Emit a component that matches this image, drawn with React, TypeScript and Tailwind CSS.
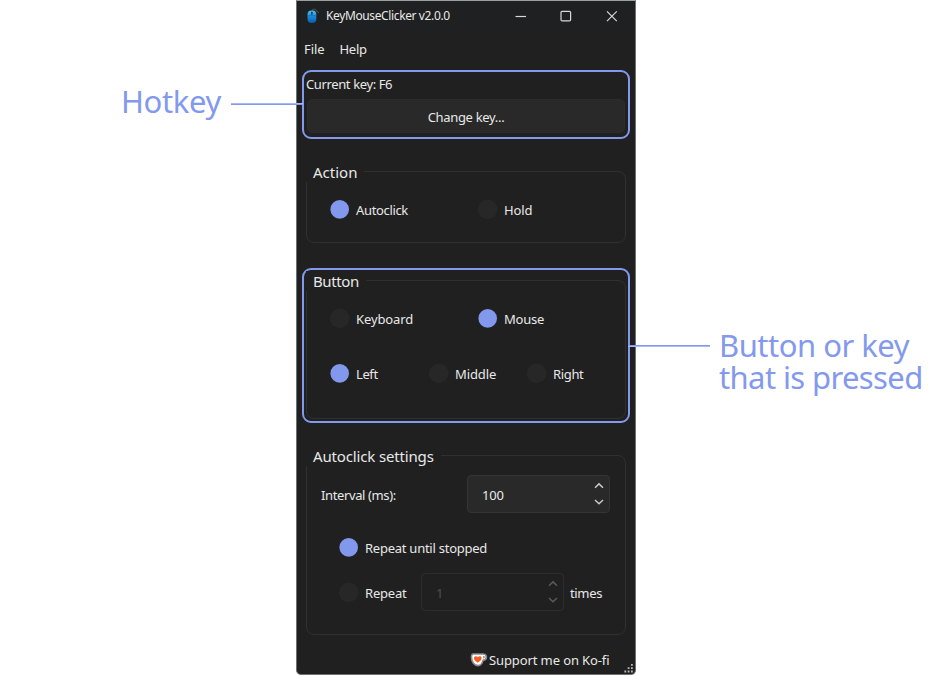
import type { ReactNode } from 'react';

function Radio({ on = false, label, className = '', text = '' }: { on?: boolean; label: string; className?: string; text?: string }) {
  return (
    <label className={`flex h-5 items-center ${className}`}>
      <svg className="shrink-0 overflow-visible" width="20" height="20" viewBox="0 0 20 20">
        <circle cx="9.7" cy="10.4" r={on ? 9.3 : 9.8} fill={on ? '#8298ec' : '#272727'} />
      </svg>
      <span className={`mt-[2px] ml-[6px] ${text}`}>{label}</span>
    </label>
  );
}

function Group({ title, titleClass, className, children }: { title: string; titleClass: string; className: string; children: ReactNode }) {
  return (
    <div className={`flex flex-col rounded-lg border border-[#303030] ${className}`}>
      <div className={`-mt-[10px] -ml-px flex h-5 shrink-0 items-center bg-[#202020] pb-px pl-[7px] text-[15px] ${titleClass}`}>{title}</div>
      {children}
    </div>
  );
}

function Spin({ value, disabled = false }: { value: string; disabled?: boolean }) {
  return (
    <div
      className={`flex h-[38px] w-[143px] shrink-0 items-center justify-between rounded-[4px] border pr-[5px] pl-[14px] ${
        disabled ? 'border-[#2d2d2d] bg-[#202020] text-[#505050]' : 'border-[#343434] bg-[#292929]'
      }`}
    >
      <span className="mt-px tracking-[-0.2px]">{value}</span>
      <svg width="10" height="24" viewBox="0 0 10 24" fill="none" stroke={disabled ? '#5a5a5a' : '#c8c8c8'} strokeWidth="1.5">
        <path d="M1 5.700 5 1.900l4 3.800M1 18l4 3.800L9 18" />
      </svg>
    </div>
  );
}

export default function App() {
  return (
    <div className="flex h-[676px] w-[932px] overflow-hidden bg-white font-['Noto_Sans','Open_Sans',sans-serif] whitespace-nowrap">
      <aside className="z-10 flex h-[120px] w-[303px] shrink-0 pt-[85px] pl-[121px] text-[#8299ee]">
        <div className="w-[110px] text-[31px] leading-8 tracking-[-0.35px]">Hotkey</div>
        <div className="mt-[18px] h-[2px] flex-1 border-t border-[#a9b9f4] bg-[#8299ee]" />
      </aside>

      <main className="-ml-[7px] flex h-[675px] w-[340px] shrink-0 flex-col rounded-b-[5px] border border-[#6d7270] border-t-[#9aa19e] bg-[#202020] text-[13px] leading-[18px] text-[#e8e8e8]">
        <header className="flex h-[31px] shrink-0 items-center bg-[#1e2021] pb-px pl-[9px]">
          <svg width="16" height="18" viewBox="0 0 16 18">
            <defs>
              <linearGradient id="mouse" x1="0" y1="0" x2="0" y2="1">
                <stop offset="0" stopColor="#4cc4f0" />
                <stop offset="0.45" stopColor="#1b8fdc" />
                <stop offset="1" stopColor="#0c58ad" />
              </linearGradient>
            </defs>
            <path d="M6.3 4.500C6.200 1.800 9 1.200 10.200 3.200c.9 1.600 1.800 1.500 2.600 2.800" fill="none" stroke="#464a4c" strokeWidth="1.2" />
            <rect x="1.5" y="3.5" width="8.800" height="12.500" rx="4" fill="url(#mouse)" />
            <path d="M1.700 8.700h8.400" stroke="#0f5fa8" strokeWidth="0.6" />
            <rect x="5.100" y="4.500" width="1.500" height="3.600" rx="0.750" fill="#123e62" />
          </svg>
          <span className="ml-[4px] text-[12px] tracking-[-0.38px]">KeyMouseClicker v2.0.0</span>
          <svg className="ml-auto" width="124" height="20" viewBox="0 0 124 20" fill="none" stroke="#d8d8d8" strokeWidth="1.2">
            <path d="M4.500 10.500H15" />
            <rect x="50" y="5.300" width="9.600" height="9.600" rx="1.2" />
            <path d="m96 5.300 9.800 9.800M105.800 5.300 96 15.100" />
          </svg>
        </header>

        <nav className="flex h-8 shrink-0 items-center gap-[15px] pt-[2px] pl-[7px]">
          <span className="tracking-[-0.1px]">File</span>
          <span className="tracking-[-0.2px]">Help</span>
        </nav>

        <section className="mx-[5px] mt-[6px] h-[69px] shrink-0 rounded-[9px] border-2 border-[#8299ee]">
          <div className="flex h-[25px] items-center pb-[2px] pl-[2px] tracking-[-0.38px]">Current key: F6</div>
          <button className="mx-[3px] mt-[2px] flex h-[34px] w-[318px] items-center justify-center rounded-[5px] border border-[#2c2c2c] bg-[#292929] pt-[2px] tracking-[-0.32px]">
            Change key...
          </button>
        </section>

        <Group title="Action" titleClass="w-[58px]" className="mt-8 ml-[9px] h-[72px] w-[320px] shrink-0">
          <div className="mt-[17px] flex pl-[23px]">
            <Radio on label="Autoclick" className="w-[148px]" text="tracking-[-0.35px]" />
            <Radio label="Hold" text="tracking-[-0.1px]" />
          </div>
        </Group>

        <section className="mx-[5px] mt-[25px] h-[155px] shrink-0 rounded-[9px] border-2 border-[#8299ee]">
          <Group title="Button" titleClass="w-[60px] tracking-[-0.4px]" className="mt-[10px] ml-[2px] h-[139px] w-[320px]">
            <div className="mt-[17px] flex pl-[23px]">
              <Radio label="Keyboard" className="w-[148px]" text="tracking-[-0.1px]" />
              <Radio on label="Mouse" text="tracking-[-0.2px]" />
            </div>
            <div className="mt-[35px] flex pl-[23px]">
              <Radio on label="Left" className="w-[99px]" text="tracking-[-0.4px]" />
              <Radio label="Middle" className="w-[98px]" text="tracking-[-0.1px]" />
              <Radio label="Right" text="tracking-[-0.35px]" />
            </div>
          </Group>
        </section>

        <Group title="Autoclick settings" titleClass="w-[135px] tracking-[-0.15px]" className="mt-8 ml-[9px] h-[180px] w-[320px] shrink-0">
          <div className="mt-[9px] flex items-center pl-[14px]">
            <span className="mt-px w-[146px] tracking-[-0.38px]">Interval (ms):</span>
            <Spin value="100" />
          </div>
          <div className="mt-[24px] flex pl-[32px]">
            <Radio on label="Repeat until stopped" text="tracking-[-0.25px]" />
          </div>
          <div className="mt-[16px] flex items-center pl-[32px]">
            <Radio label="Repeat" className="-mt-px w-[82px]" text="tracking-[-0.2px]" />
            <Spin value="1" disabled />
            <span className="mt-px ml-[6px] tracking-[-0.35px]">times</span>
          </div>
        </Group>

        <footer className="flex flex-1 items-center pr-[2px] pl-[173px]">
          <svg className="mt-[10px] shrink-0" width="18" height="14" viewBox="0 0 18 14">
            <path d="M3.200 1h9.800c2.300 0 3.400 1.200 3.400 3 0 2-1.400 3.200-3.400 3.400-.8 3.200-2.400 5.200-4.900 5.200-3.600 0-6.600-3.700-6.600-8.400C1.500 2.200 1.900 1 3.200 1Z" fill="#fff" stroke="#8b8b8b" strokeWidth="1.6" />
            <path d="M13.200 3c1.100 0 1.700.4 1.700 1.100s-.6 1.300-1.700 1.400Z" fill="#8b8b8b" />
            <path d="M7.800 9.800C5.400 8.200 4 7 4 5.300c0-2.200 2.700-2.500 3.800-1 1.100-1.500 3.800-1.200 3.800 1 0 1.700-1.400 2.900-3.800 4.500Z" fill="#ff5a22" />
          </svg>
          <span className="mt-[11px] ml-px tracking-[-0.11px]">Support me on Ko-fi</span>
          <svg className="mt-auto mb-px ml-auto" width="9" height="9" viewBox="0 0 9 9" fill="#b8b8b8">
            <path d="M7 0h1.800v1.800H7zM7 3.300h1.800v1.800H7zM3.700 3.300h1.800v1.800H3.700zM7 6.600h1.800v1.800H7zM3.700 6.600h1.800v1.800H3.700zM.4 6.600h1.800v1.800H.4z" />
          </svg>
        </footer>
      </main>

      <aside className="z-10 -ml-[8px] flex h-[400px] shrink-0 pt-[328px] text-[#8299ee]">
        <div className="mt-[17px] h-[2px] w-[82px] border-t border-[#8299ee] bg-[#a9b9f4]" />
        <div className="mt-px ml-[9px] text-[31px] leading-8">
          <div className="tracking-[-0.5px]">Button or key</div>
          <div className="tracking-[-0.62px]">that is pressed</div>
        </div>
      </aside>
    </div>
  );
}
